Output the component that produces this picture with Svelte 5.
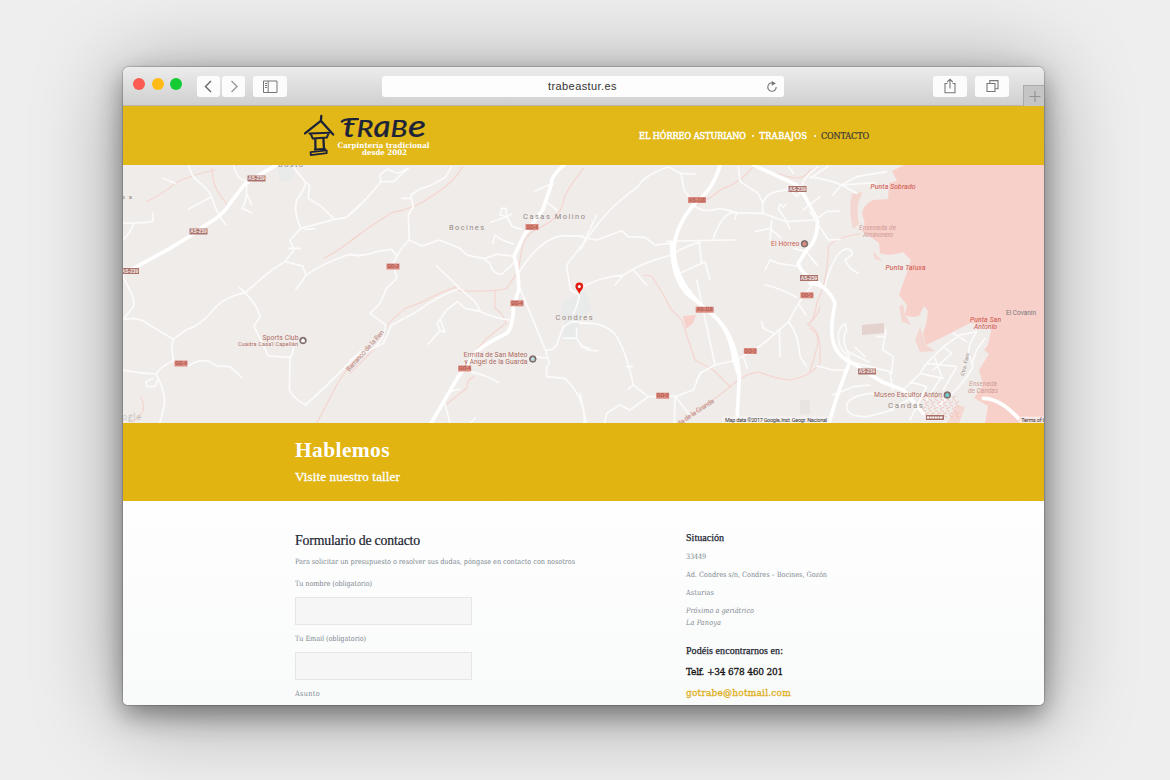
<script>
  function fit(node, width) {
    const natural = node.getBoundingClientRect().width;
    const n = node.textContent.length;
    node.style.letterSpacing = (width - natural) / n + 'px';
  }

  // Map tiles: paths are in thirds of a pixel from the tile origin.
  const tiles = [
    {
      x: 120, y: 160,
      streams: [
        'M80 125 Q130 100 165 70 Q210 45 285 30 M275 25 Q280 80 300 105 L320 132',
        'M612 295 Q660 270 720 222',
        'M590 790 L650 675 Q680 620 720 590',
        'M340 20 l12 -8 M62 710 Q80 740 62 765 L30 795'
      ],
      roads: [
        'M128 55 L165 70 M205 10 Q210 45 235 65 Q270 90 278 120 Q290 160 318 195 M205 148 L272 112',
        'M0 188 Q50 192 98 185 L98 158 M40 194 Q30 220 8 240',
        'M340 10 Q345 55 380 65 M380 75 Q380 130 366 145 L395 158 M380 100 L395 135',
        'M520 20 L555 65 Q560 80 530 120 Q520 160 543 205 L510 240 L522 270 L495 305 L455 330 L375 398 Q320 410 290 438 Q240 500 200 508 L160 538',
        'M555 65 L568 75 L565 115 L605 140 L643 178 M543 205 L643 178 L680 172 L722 132 M505 265 h18 l18 0 M555 208 l30 -2',
        'M495 305 L548 318 L558 345 Q545 370 528 388 M558 345 Q610 310 690 282 L720 288',
        'M375 398 L358 382 M375 398 Q415 440 420 470 L402 498 L445 588 L510 592 Q525 575 518 550 M510 592 L508 690 Q520 715 556 735 Q620 680 720 575',
        'M8 350 Q50 420 40 440 L15 472 M8 478 Q60 470 80 490 L160 538 L155 560 L160 602 M8 630 Q60 640 108 642 Q120 620 160 602 L205 618 Q240 595 270 605 L290 618 L330 620 L365 652',
        'M108 642 Q140 700 132 740 L118 795 M98 655 L78 665 L80 680 L105 680 L112 662'
      ],
      mains: ['M470 15 Q400 55 372 75 L330 130 Q310 165 265 190 L210 228 L150 265 L50 320 L-10 350']
    },
    {
      x: 350, y: 160,
      streams: [
        'M338 20 Q310 70 250 105 Q200 145 125 158 L60 200 L0 243',
        'M700 25 L660 80 Q640 110 638 135 Q620 180 575 200 Q530 220 520 250 Q510 290 505 335 Q480 370 470 385 Q450 395 330 393 L315 382 Q250 405 220 425 L165 445 L115 490 L80 560 L0 640',
        'M435 395 L435 445 Q460 460 468 490 L410 535 L380 570 M372 650 Q350 660 350 685 L290 732'
      ],
      roads: [
        'M0 163 Q50 120 92 65 L90 45 L110 28 L145 40 L175 25 M92 65 L130 65 L175 25',
        'M305 20 L285 52 Q240 80 215 85 L182 105 L190 140 L175 165 L178 240 Q150 265 130 310 L140 355 L110 385 L90 430 L60 460 L108 495 Q100 540 75 560 M155 115 h30',
        'M0 285 Q40 290 80 275 L125 268 L138 285 M178 240 L215 258 L268 240 L330 265 L350 285 L402 296 L440 283 L492 288',
        'M402 296 L420 310 Q425 340 455 343 L490 310 M492 252 Q450 240 435 225 L428 250 M515 208 L487 200 L470 170 L485 162 M470 170 L450 165 L455 145 L468 145 L470 170 L422 187',
        'M260 318 L330 385 L375 425 L392 455 M330 385 Q260 410 200 455 L125 495 L100 550 L0 600',
        'M235 552 L270 512 L262 490 L290 450 L322 425 L345 445 L392 455 Q435 475 480 480 M270 512 l15 5 l-15 -40',
        'M555 93 L603 72 M592 128 L620 150 M508 335 Q570 235 640 227 L700 228 M740 165 L700 250 L650 315 L655 350 L662 390 L688 405',
        'M510 385 L588 575 L598 610 L590 620 L590 650 L645 655 Q710 720 702 795 M560 590 L588 595 M590 570 Q615 575 625 540 L640 500 M688 400 Q685 435 670 460 M640 500 L665 485 L720 490 M640 535 h40 v-30 M680 535 L695 560 L720 565',
        'M360 635 Q410 645 445 668 M300 695 l28 -8 M285 730 L300 790 M355 795 l22 -22'
      ],
      mains: ['M648 10 Q600 50 605 70 L578 150 Q550 190 525 220 L492 288 Q508 340 506 390 L490 440 Q490 500 470 520 Q400 555 380 575 L325 650 Q290 710 240 795']
    },
    {
      x: 580, y: 160,
      streams: [
        'M520 20 Q480 70 420 90 Q400 110 350 135 M530 20 Q570 45 600 42 Q670 70 690 30 L715 25',
        'M190 345 L215 348 Q250 400 275 450 L305 480 L345 600 L400 630 L450 680 Q400 720 370 740 L295 795',
        'M450 680 Q500 635 540 637 Q580 655 630 660 Q690 650 720 610 L720 560 Q715 500 682 495 Q720 460 720 440'
      ],
      roads: [
        'M0 270 Q70 150 175 80 Q185 50 265 20 L300 40 L345 42 M303 40 L312 90 L345 135 M0 230 L50 240 L125 212 L145 230 L195 232 L225 255 L275 250',
        'M345 140 Q380 160 420 145 L470 158 L545 160 M260 245 Q350 240 465 240 M400 235 Q430 150 470 158 l-5 20',
        'M0 385 Q60 350 130 345 Q190 305 275 285 Q300 265 360 245 M160 330 L200 375 M130 345 L105 375 M300 340 L375 305 L390 360 M358 248 L365 310',
        'M475 20 L480 65 L535 100 L548 130 Q560 100 590 95 L625 88 M548 130 L548 160 L620 185 L700 180 M575 180 L570 240 M525 215 L570 205 L605 235 M620 182 l-25 -35 l5 -15 l10 10 l8 -10 M620 185 l10 22',
        'M555 330 L570 300 L595 310 L650 318 M555 375 Q590 380 650 412 M640 265 L680 275 L710 315',
        'M350 360 L405 615 M470 600 L405 615 L360 640 L340 690 L290 708 L205 710 L160 675 Q140 580 110 530 Q80 485 0 490 M160 675 l-15 12 M140 620 h18',
        'M205 710 L150 750 L120 735 L80 760 L72 795 M285 708 L283 795 M285 708 L325 760 M0 550 L20 570 L55 573 M0 700 L20 795 M365 635 l-15 25',
        'M470 600 L545 555 Q610 500 625 485 L665 415 L700 370 M625 485 Q655 520 660 590 L680 620 M598 510 L600 590 M545 485 l5 20 l30 15 M490 590 l12 35 M655 430 l22 35',
        'M665 90 L650 110 L620 80 M640 40 L625 20 M665 75 Q680 40 715 20 M670 150 l50 -40'
      ],
      mains: [
        'M420 15 Q400 90 340 135 Q270 220 285 300 Q300 380 375 445 Q470 510 478 650 L470 800',
        'M275 250 Q275 350 320 400 L400 465 Q450 510 462 600 L478 650',
        'M520 15 Q620 60 650 75 L675 110 L712 180 Q715 240 680 270 L655 310 Q660 340 720 372'
      ]
    },
    {
      x: 810, y: 160,
      streams: ['M150 222 Q80 230 55 260 Q55 320 40 380 L20 430 Q15 470 0 490 M0 505 Q30 520 22 560 L0 635'],
      roads: [
        'M45 380 Q70 280 105 268 Q130 265 125 285 L105 300 L120 325 L145 340 M0 55 L55 18 M0 50 Q60 60 95 75 L195 68 M68 105 L95 75 L140 50 L230 35 M95 75 L140 100 M0 140 L20 180 M15 180 L50 155 L88 153 M0 155 L55 240 L90 238 M0 290 L22 315',
        'M120 600 L90 560 Q75 510 105 490 L110 510 Q90 540 120 590 M20 618 L70 630 L110 630 M120 605 L240 635 L248 690 M115 575 L175 605 M135 562 L165 590 M228 510 L218 570 L250 590 L245 640 M200 530 h25',
        'M110 740 Q110 710 180 700 L250 710 M68 705 L130 680 L180 675 M110 740 Q110 770 170 770 L250 750',
        'M280 690 L330 640 L350 610 L400 560 L450 525 L500 515 L480 550 L475 580 L490 620 Q450 690 380 740 M300 665 L350 680 M330 640 L400 655 M350 610 L440 620 M400 560 L425 580 L370 630 M440 620 L400 690 M470 545 L430 520 M485 615 L500 570 L525 535 M350 680 L300 780 M375 595 L395 650 L350 720 M240 750 L330 700'
      ],
      mains: ['M0 370 Q50 370 75 430 Q60 500 68 540 Q80 590 125 608 L215 665 L280 690 L340 760', 'M120 605 Q85 690 55 795', 'M520 715 Q570 715 625 775']
    }
  ];

  const shields = [
    [256.5, 178.5, 'AS-239', 0], [198.5, 231.5, 'AS-239', 0], [130, 271, 'AS-239', 0],
    [797.5, 189, 'AS-239', 0], [809, 278, 'AS-239', 0], [867, 371.5, 'AS-239', 0],
    [697, 200, 'AS-118', 1], [704.7, 309.7, 'AS-118', 1],
    [181, 363.5, 'GO-4', 1], [393, 266.5, 'GO-2', 1], [532, 227, 'GO-4', 1], [517, 303.3, 'GO-4', 1],
    [464.7, 368.5, 'GO-4', 1], [807, 295.3, 'GO-5', 1], [750.3, 351, 'GO-5', 1], [662.7, 395.7, 'GO-5', 1]
  ];

  const streets = Array.from({ length: 24 }, (_, i) => ({
    x: 922 + (i % 6) * 6 + (Math.floor(i / 6) % 2) * 3,
    y: 398 + Math.floor(i / 6) * 5.5
  }));
</script>

<div class="desk">
  <main class="window">
    <div class="toolbar">
      <div class="lights"><i class="red"></i><i class="amber"></i><i class="green"></i></div>
      <div class="nav">
        <button aria-label="Atrás"><svg width="23" height="21" viewBox="0 0 23 21"><path d="M14 5 L8.5 10.5 L14 16" stroke="#666" stroke-width="1.4" /></svg></button>
        <button aria-label="Adelante"><svg width="23" height="21" viewBox="0 0 23 21"><path d="M9.5 5 L15 10.5 L9.5 16" stroke="#999" stroke-width="1.4" /></svg></button>
      </div>
      <button class="side" aria-label="Barra lateral"><svg width="34" height="21" viewBox="0 0 34 21"><path d="M10.5 5 h13.5 v11.5 h-13.5z M15.2 5 v11.5 M12 7.5 h2 M12 9.5 h2 M12 11.5 h2" stroke="#777" /></svg></button>
      <div class="address">
        <span class="url" use:fit={69}>trabeastur.es</span>
        <svg class="reload" width="12" height="12" viewBox="0 0 12 12"><path d="M8.2 2.5 A4.2 4.2 0 1 0 10.2 6" stroke="#777" stroke-width="1.1" /><path d="M5.8 0 L9.8 2.4 L5.8 4.8z" fill="#777" /></svg>
      </div>
      <button class="share" aria-label="Compartir"><svg width="34" height="21" viewBox="0 0 34 21"><path d="M14.5 7.5 h-2.5 v9.2 h10 v-9.2 h-2.5 M17 12.5 V3.5 M14.2 6 L17 3.2 L19.8 6" stroke="#777" stroke-width="1.1" /></svg></button>
      <button class="tabs" aria-label="Pestañas"><svg width="34" height="21" viewBox="0 0 34 21"><path d="M12 7.5 h8 v8 h-8z M14.8 7 v-2.4 h8.2 v8.2 h-2.5" stroke="#777" stroke-width="1.1" /></svg></button>
      <div class="plus"><svg width="21" height="20" viewBox="0 0 21 20"><path d="M5.5 10.5 h11 M11 5 v11" stroke="#929292" stroke-width="1.2" /></svg></div>
    </div>

    <header>
      <svg class="logo" width="130" height="59" viewBox="302 106 130 59">
        <g fill="none" stroke="#1c2338" stroke-width="2.3" stroke-linecap="round" stroke-linejoin="round">
          <path d="M321.3 115.8 L320.9 121 M305 133.3 L320.8 120.8 L333.2 134.6" />
          <path d="M309.5 133.6 L329.5 132.8 M310.8 134 L312.8 138.6 L326.8 137.6 L328.6 133.3" stroke-width="2" />
          <path d="M315.3 139 L315.5 149.5 M323.4 138.5 L324 149" stroke-width="2.3" />
          <path d="M314.8 149.4 L325 148.8 M310.6 152.2 L326.7 150.4 L326.7 153.2 L310.8 155.2z" stroke-width="1.8" />
        </g>
        <g fill="#1c2338" stroke="#1c2338" stroke-width=".2" font-family="Lato" font-style="italic" font-weight="500">
          <text x="343" y="137" font-size="27" textLength="12" lengthAdjust="spacingAndGlyphs">t</text>
          <path d="M341.8 121.6 Q344 118.4 358 119.2" fill="none" stroke-width="2.2" stroke-linecap="round" />
          <text x="356.5" y="137" font-size="22.5" textLength="17" lengthAdjust="spacingAndGlyphs">R</text>
          <text x="373.5" y="137" font-size="30" textLength="17" lengthAdjust="spacingAndGlyphs">a</text>
          <text x="390.5" y="137" font-size="22.5" textLength="17" lengthAdjust="spacingAndGlyphs">B</text>
          <text x="408" y="137" font-size="30" textLength="18" lengthAdjust="spacingAndGlyphs">e</text>
        </g>
        <g fill="#fff" font-family="DejaVu Serif" font-weight="700" font-size="7.6">
          <text x="337.5" y="148" textLength="92" lengthAdjust="spacingAndGlyphs">Carpintería tradicional</text>
          <text x="362" y="155.3" textLength="45" lengthAdjust="spacingAndGlyphs">desde 2002</text>
        </g>
      </svg>
      <nav>
        <a href="#horreo"><span use:fit={107}>EL HÓRREO ASTURIANO</span></a><b></b>
        <a href="#trabajos"><span use:fit={48}>TRABAJOS</span></a><b></b>
        <a class="current" href="#contacto"><span use:fit={48}>CONTACTO</span></a>
      </nav>
    </header>

    <svg class="map" width="921" height="258" viewBox="123 165 921 258">
      <rect x="123" y="165" width="921" height="258" fill="#f0ecea" />
      <g fill="#f7d0ca">
        <path d="M904 165 L892 171 L897 181 L889 183 L888 199 L873 200 Q862 206 862 214 Q867 226 862 231 L879 243 L880 253 Q888 257 903 252 L911 260 L906 275 L899 295 L907 305 L905 315 L912 317 L919 316 L924 306 L928 311 L926 325 L923 333 L926 345 L945 336 L970 323 L992 326 L988 345 L984 350 L989 354 L979 370 L983 385 L974 398 L988 406 L985 423 H1044 V165z" />
        <path d="M852 194 L863 192 Q855 204 859 224 L853 229 Q848 208 852 194z M873 251 l9 10 l-7 -2z M903 304 L899 307 L902 322 L911 325 L905 314z M920 327 L915 340 L920 352 L935 351 L926 345z M957 405 l8 2 l-6 16 h-12z" opacity=".75" />
        <path d="M683 316 L696 315 L693 323 L686 329z" />
        <path d="M862 325 L884 323 V333 L862 335z" fill="#e3d2cd" />
      </g>
      <path d="M566 300 L585 291 L592 310 L579 320 L579 341 L562 341 Q568 320 560 309z M278 165 h18 l-4 16 l-13 0z" fill="#e9ebeb" />
      <rect x="800" y="400" width="10" height="14" fill="#e8e4e1" />

      {#each tiles as tile}
        <g transform="translate({tile.x} {tile.y}) scale(.33333)" fill="none" stroke-linejoin="round" stroke-linecap="round">
          {#each tile.streams as d}<path {d} stroke="#f5d5cf" stroke-width="3.6" />{/each}
          {#each tile.roads as d}<path {d} stroke="#fcfbfb" stroke-width="5" />{/each}
          {#each tile.mains as d}<path {d} stroke="#fff" stroke-width="11" />{/each}
        </g>
      {/each}

      {#each streets as s}<path d="M{s.x} {s.y} l4 -2 M{s.x + 1} {s.y + 1} l3 2" stroke="#efb9b1" stroke-width=".8" />{/each}

      {#each shields as [x, y, label, minor]}
        <g>
          <rect x={x - (label.length > 4 ? 9 : 6.5)} y={y - 3} width={label.length > 4 ? 18 : 13} height="6" fill={minor ? '#d98b80' : '#aa746c'} />
          <text {x} y={y + 1.7} font-family="Liberation Sans" font-size="4.8" font-weight="700" text-anchor="middle" fill={minor ? '#b3574c' : '#f8eeec'}>{label}</text>
        </g>
      {/each}
      <rect x="926" y="415" width="18" height="5" fill="#a97069" />
      <path d="M927 417.5 h16" stroke="#fff" stroke-width="2" stroke-dasharray="2 .6" />

      <g class="place">
        <text x="523" y="219" textLength="62">Casas Molino</text>
        <text x="449" y="230" textLength="35">Bocines</text>
        <text x="555.5" y="319.5" textLength="37">Condres</text>
        <text x="888" y="408" textLength="35" font-size="8">Candás</text>
        <text x="278" y="166.5" textLength="25">Dosto</text>
        <text x="122" y="199" textLength="10" font-size="6">sa</text>
      </g>
      <g class="poi">
        <text x="262.5" y="340" textLength="36">Sports Club</text>
        <text x="238" y="346" textLength="60" font-size="5.5">Cuadra Casa'l Capellán</text>
        <text x="463.5" y="357" textLength="64">Ermita de San Mateo</text>
        <text x="464.5" y="364" textLength="63">y Ángel de la Guarda</text>
        <text x="771" y="246.3" textLength="28.5" fill="#cb5f52">El Hórreo</text>
        <text x="874" y="397" textLength="68">Museo Escultor Antón</text>
        <text transform="translate(349 372) rotate(-48)" textLength="53" opacity=".8">Barranco de la Ren</text>
        <text transform="translate(679 426) rotate(-34)" textLength="43" opacity=".8">da de la Granda</text>
      </g>
      <g class="coast">
        <text x="870.5" y="189" textLength="45">Punta Sobrado</text>
        <text x="885.5" y="269.5" textLength="40">Punta Taluxa</text>
        <text x="970" y="321.5" textLength="31">Punta San</text>
        <text x="974" y="328.5" textLength="23">Antonio</text>
      </g>
      <g class="bay">
        <text x="859" y="230" textLength="37">Ensenada de</text>
        <text x="863" y="237" textLength="30">Arminonero</text>
        <text x="969" y="386" textLength="28">Ensenada</text>
        <text x="968" y="392.5" textLength="30">de Candás</text>
      </g>
      <text x="1006" y="315" textLength="30" class="grey">El Covanín</text>
      <text transform="translate(964 376) rotate(-76)" textLength="23" class="grey small">Ctra. Faro</text>

      {#each [[303, 340.5, '#fff'], [532.8, 359, '#bfe0e4'], [804.5, 243.8, '#e58b80'], [947.3, 395, '#6fd3d2']] as [x, y, c]}
        <circle cx={x} cy={y} r="3.3" fill="#8b7974" stroke="#70605f" stroke-width=".8" />
        <path d="M{x - 1.8} {y + 1.8} V{y - .5} L{x} {y - 2.2} L{x + 1.8} {y - .5} V{y + 1.8}z" fill={c} />
      {/each}

      <path d="M579.3 294.5 C578.5 290.8 575.4 289.4 575.4 286.3 A3.9 3.9 0 0 1 583.2 286.3 C583.2 289.4 580.1 290.8 579.3 294.5z" fill="#e21b13" />
      <circle cx="579.3" cy="286.4" r="1.5" fill="#fff" />

      <text x="122" y="419.5" font-family="Open Sans" font-size="8.5" fill="#fff" stroke="#bdb7b4" stroke-width=".35" textLength="19">ogle</text>
      <rect x="722" y="416.5" width="107" height="6.5" fill="#f7f4f2" opacity=".8" />
      <rect x="1019" y="416.5" width="25" height="6.5" fill="#fae6e2" />
      <g font-family="Roboto" font-size="5.5" fill="#333">
        <text x="725" y="421.5" textLength="102">Map data ©2017 Google, Inst. Geogr. Nacional</text>
        <text x="1021.3" y="421.5" textLength="30">Terms of Use</text>
      </g>
    </svg>

    <section class="banner">
      <h1><span use:fit={95}>Hablemos</span></h1>
      <p><span use:fit={105}>Visite nuestro taller</span></p>
    </section>

    <section class="content">
      <form>
        <h2><span use:fit={125}>Formulario de contacto</span></h2>
        <p class="intro"><span use:fit={280}>Para solicitar un presupuesto o resolver sus dudas, póngase en contacto con nosotros</span></p>
        <label><span use:fit={77}>Tu nombre (obligatorio)</span><input type="text" /></label>
        <label><span use:fit={71}>Tu Email (obligatorio)</span><input type="text" /></label>
        <label><span use:fit={25}>Asunto</span></label>
      </form>
      <aside>
        <h3><span use:fit={38}>Situación</span></h3>
        <p><span use:fit={20}>33449</span></p>
        <p><span use:fit={141}>Ad. Condres s/n, Condres – Bocines, Gozón</span></p>
        <p><span use:fit={28}>Asturias</span></p>
        <p class="near"><span use:fit={68}>Próximo a geriátrico</span><br /><span use:fit={35}>La Panoya</span></p>
        <h3 class="find"><span use:fit={97}>Podéis encontrarnos en:</span></h3>
        <p class="tel"><span use:fit={97}>Telf. +34 678 460 201</span></p>
        <p class="mail"><span use:fit={105}>gotrabe@hotmail.com</span></p>
      </aside>
    </section>
  </main>
</div>

<style>
  :global(body) { margin: 0; background: #eee; }
  .desk { width: 1170px; height: 780px; padding: 67px 0 0 123px; box-sizing: border-box; overflow: hidden; background: #eee; }
  .window {
    width: 921px; height: 638px; border-radius: 6px 6px 5px 5px; overflow: hidden; display: flex; flex-direction: column;
    background: #fcfcfc; box-shadow: 0 0 1px 1px rgba(0,0,0,.18), 0 10px 26px rgba(0,0,0,.38), 0 8px 85px 2px rgba(0,0,0,.36);
  }
  span { display: inline-block; white-space: nowrap; }
  svg { display: block; }
  .toolbar { height: 39px; flex: none; display: flex; box-sizing: border-box; padding-top: 9px; background: linear-gradient(#ececec, #d0d0d0); border-bottom: 1px solid #b9b6ad; }
  .toolbar svg { fill: none; }
  .lights { display: flex; gap: 6.5px; padding: 2px 0 0 10px; width: 64px; box-sizing: border-box; }
  .lights i { width: 12px; height: 12px; border-radius: 50%; }
  .red { background: #fc5b52; } .amber { background: #fdbb13; } .green { background: #12cb35; }
  button { padding: 0; border: 0; border-radius: 3px; background: #fcfcfc; height: 21px; display: block; }
  .nav { display: flex; gap: 2px; width: 48px; margin-left: 10px; }
  .side { margin-left: 8px; width: 34px; }
  .address { width: 402px; height: 21px; border-radius: 3px; background: #fdfdfd; margin-left: 95px; display: flex; align-items: center; box-sizing: border-box; padding: 0 6px 0 166px; justify-content: space-between; font: 11px/21px "Liberation Sans", sans-serif; color: #333; }
  .share { margin-left: 149px; width: 34px; }
  .tabs { margin-left: 8px; width: 34px; }
  .plus { margin: 9px 0 0 auto; width: 21px; height: 21px; background: #c5c5c5; border: solid #aaa; border-width: 1px 0 0 1px; box-sizing: border-box; }
  header { height: 59px; flex: none; background: #e2b718; box-sizing: border-box; padding: 0 175px 0 179px; display: flex; justify-content: space-between; }
  nav { display: flex; align-items: center; height: 60px; font: 500 9px/12px "DejaVu Serif Condensed", "DejaVu Serif", serif; -webkit-text-stroke: .45px; }
  nav a { color: #fff; text-decoration: none; }
  nav a.current { color: #34343c; -webkit-text-stroke: .2px; }
  nav b { width: 2px; height: 2px; border-radius: 50%; background: #fff; margin: 0 5.5px 0 6px; }
  .map { flex: none; overflow: hidden; }
  .map .place { font-family: Roboto, sans-serif; font-size: 7.5px; fill: #968984; }
  .poi { font-family: Roboto, sans-serif; font-size: 6.8px; fill: #ad6a61; }
  .coast { font: italic 400 6.7px Roboto, sans-serif; fill: #d26154; stroke: #d26154; stroke-width: .1px; }
  .bay { font: italic 6.5px Roboto, sans-serif; fill: #cf9b93; }
  .grey { font-family: Roboto, sans-serif; font-size: 6.5px; fill: #777; }
  .small { font-size: 5.2px; fill: #918a88; }
  .banner { height: 78px; flex: none; background: #e1b412; color: #fff; padding: 16px 0 0 172px; box-sizing: border-box; }
  h1, h2, h3, p { margin: 0; }
  h1 { font: 700 21.5px/22px "Liberation Serif", serif; }
  .banner p { font: 13px/16px "Liberation Serif", serif; margin-top: 8px; -webkit-text-stroke: .3px; }
  .content { flex: 1; display: flex; padding-left: 172px; background: linear-gradient(#fefefe, #f9fafa); }
  form { width: 391px; padding-top: 32px; }
  h2 { font: 13.8px/16px "Liberation Serif", serif; color: #1b2430; -webkit-text-stroke: .2px; }
  .intro, label, aside p { font: 7.3px/12px "DejaVu Serif Condensed", "DejaVu Serif", serif; color: #818a92; }
  .intro { margin-top: 7px; }
  label { display: block; margin-top: 10px; }
  label + label { margin-top: 8px; }
  input { display: block; width: 177px; height: 28px; border: 1px solid #e6e6e6; background: #f6f6f6; margin: 7px 0 0; box-sizing: border-box; }
  aside { padding-top: 31px; }
  h3 { font: 10px/12px "Liberation Serif", serif; color: #1b2430; -webkit-text-stroke: .25px; margin-bottom: 7px; }
  aside p { margin-bottom: 6px; }
  .near { font-style: italic; }
  .near span, form span, aside span { vertical-align: top; }
  .find { margin-top: 16px; }
  aside .tel, aside .mail { font-size: 10px; line-height: 14px; color: #111; margin-top: 8px; -webkit-text-stroke: .3px; margin-bottom: 0; }
  aside .mail { color: #deb022; margin-top: 7px; }
</style>
